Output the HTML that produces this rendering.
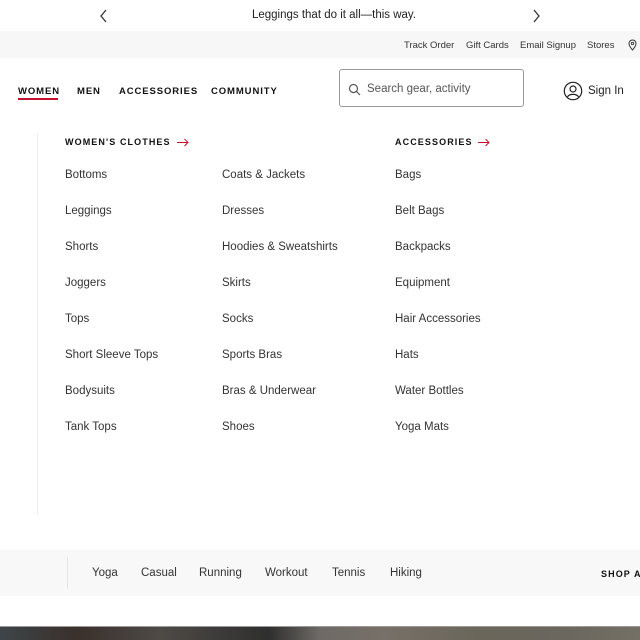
<!DOCTYPE html>
<html><head><meta charset="utf-8"><style>
*{margin:0;padding:0;box-sizing:border-box}
body{width:640px;height:640px;overflow:hidden;background:#fff;font-family:"Liberation Sans",sans-serif;color:#222;position:relative}
.a{position:absolute;white-space:nowrap}
.s{font-size:11.5px;color:#333}
.nav{font-size:9.5px;font-weight:bold;letter-spacing:0.9px;color:#111}
.h{font-size:9px;font-weight:bold;letter-spacing:1.1px;color:#111}
.m{font-size:11.5px;color:#333}
</style></head><body>
<svg class="a" style="left:99px;top:8px" width="10" height="16"><path d="M7 2 L2 8 L7 14" fill="none" stroke="#333" stroke-width="1.3"/></svg>
<div class="a" style="left:0;width:668px;top:9px;text-align:center;font-size:11.5px;color:#222">Leggings that do it all—this way.</div>
<svg class="a" style="left:531px;top:8px" width="10" height="16"><path d="M3 2 L8 8 L3 14" fill="none" stroke="#333" stroke-width="1.3"/></svg>
<div class="a" style="left:0;top:31px;width:640px;height:27px;background:#f7f7f7"></div>
<div class="a" style="left:404px;top:40px;font-size:9.5px;color:#333">Track Order</div>
<div class="a" style="left:466px;top:40px;font-size:9.5px;color:#333">Gift Cards</div>
<div class="a" style="left:520px;top:40px;font-size:9.5px;color:#333">Email Signup</div>
<div class="a" style="left:587px;top:40px;font-size:9.5px;color:#333">Stores</div>
<svg class="a" style="left:628px;top:39px" width="10" height="12"><path d="M4.5 11 C1 7 1 5.5 1 4.5 A3.5 3.5 0 0 1 8 4.5 C8 5.5 8 7 4.5 11Z" fill="none" stroke="#333" stroke-width="1"/><circle cx="4.5" cy="4.5" r="1.2" fill="none" stroke="#333" stroke-width="0.9"/></svg>
<div class="a nav" style="left:18px;top:86px">WOMEN</div>
<div class="a" style="left:18px;top:98px;width:40px;height:2px;background:#c8102e"></div>
<div class="a nav" style="left:77px;top:86px">MEN</div>
<div class="a nav" style="left:119px;top:86px">ACCESSORIES</div>
<div class="a nav" style="left:211px;top:86px">COMMUNITY</div>
<div class="a" style="left:339px;top:69px;width:185px;height:38px;border:1px solid #999;border-radius:3px"></div>
<svg class="a" style="left:348px;top:83px" width="13" height="13"><circle cx="5.5" cy="5.5" r="4" fill="none" stroke="#555" stroke-width="1.2"/><path d="M8.5 8.5 L12 12" stroke="#555" stroke-width="1.2"/></svg>
<div class="a" style="left:367px;top:83px;font-size:11.5px;color:#555">Search gear, activity</div>
<svg class="a" style="left:563px;top:81px" width="20" height="20"><circle cx="10" cy="10" r="8.7" fill="none" stroke="#222" stroke-width="1.2"/><circle cx="10" cy="8" r="3" fill="none" stroke="#222" stroke-width="1.2"/><path d="M4.5 16 C6 12.5 14 12.5 15.5 16" fill="none" stroke="#222" stroke-width="1.2"/></svg>
<div class="a" style="left:588px;top:85px;font-size:11.5px;color:#222">Sign In</div>
<div class="a" style="left:37px;top:133px;width:1px;height:382px;background:#eee"></div>
<div class="a h" style="left:65px;top:137px">WOMEN'S CLOTHES</div>
<svg class="a" style="left:177px;top:138px" width="13" height="9"><path d="M0 4.5 H11 M7.5 1 L11 4.5 L7.5 8" fill="none" stroke="#c8102e" stroke-width="1"/></svg>
<div class="a h" style="left:395px;top:137px">ACCESSORIES</div>
<svg class="a" style="left:478px;top:138px" width="13" height="9"><path d="M0 4.5 H11 M7.5 1 L11 4.5 L7.5 8" fill="none" stroke="#c8102e" stroke-width="1"/></svg>
<div class="a m" style="left:65px;top:157px;line-height:36px">Bottoms<br>Leggings<br>Shorts<br>Joggers<br>Tops<br>Short Sleeve Tops<br>Bodysuits<br>Tank Tops</div>
<div class="a m" style="left:222px;top:157px;line-height:36px">Coats &amp; Jackets<br>Dresses<br>Hoodies &amp; Sweatshirts<br>Skirts<br>Socks<br>Sports Bras<br>Bras &amp; Underwear<br>Shoes</div>
<div class="a m" style="left:395px;top:157px;line-height:36px">Bags<br>Belt Bags<br>Backpacks<br>Equipment<br>Hair Accessories<br>Hats<br>Water Bottles<br>Yoga Mats</div>
<div class="a" style="left:0;top:550px;width:640px;height:46px;background:#f8f8f8"></div>
<div class="a" style="left:67px;top:557px;width:1px;height:32px;background:#e6e6e6"></div>
<div class="a s" style="left:92px;top:567px">Yoga</div>
<div class="a s" style="left:141px;top:567px">Casual</div>
<div class="a s" style="left:199px;top:567px">Running</div>
<div class="a s" style="left:265px;top:567px">Workout</div>
<div class="a s" style="left:332px;top:567px">Tennis</div>
<div class="a s" style="left:390px;top:567px">Hiking</div>
<div class="a h" style="left:601px;top:569px">SHOP ALL</div>
<div class="a" style="left:0;top:627px;width:640px;height:13px;background:linear-gradient(90deg,#3e4548 0%,#3a302c 12%,#4e4a46 25%,#2f2f2f 42%,#6e6a66 50%,#777068 60%,#6a665a 75%,#6b665e 88%,#757065 100%)"></div>
<div class="a" style="left:0;top:626px;width:640px;height:1px;background:#999"></div>
</body></html>
